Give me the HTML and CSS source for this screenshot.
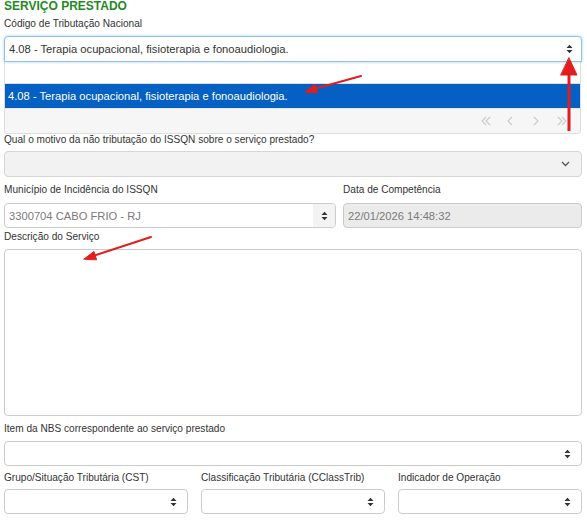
FILE: index.html
```html
<!DOCTYPE html>
<html lang="pt-BR">
<head>
<meta charset="utf-8">
<title>Serviço Prestado</title>
<link rel="stylesheet" href="styles.css">
</head>
<body>
<div class="page">
  <h2 class="title">SERVIÇO PRESTADO</h2>

  <div class="field f-codigo">
    <label class="lbl">Código de Tributação Nacional</label>
    <div class="ctl select focus">
      <span class="val">4.08 - Terapia ocupacional, fisioterapia e fonoaudiologia.</span>
      <svg class="sort" width="7" height="10" viewBox="0 0 7 10"><path d="M0.5 4 L3.5 0.8 L6.5 4 Z M0.5 6 L3.5 9.2 L6.5 6 Z" fill="#333"/></svg>
    </div>
    <div class="dropdown">
      <div class="dd-search"></div>
      <div class="dd-opt">4.08 - Terapia ocupacional, fisioterapia e fonoaudiologia.</div>
      <div class="dd-pager">
        <svg width="90" height="12" viewBox="0 0 90 12" class="pager-icons">
          <g fill="none" stroke="#c9c9c9" stroke-width="1.1">
            <polyline points="5,2 1,6 5,10"/><polyline points="9,2 5,6 9,10"/>
            <polyline points="31,2 27,6 31,10"/>
            <polyline points="53,2 57,6 53,10"/>
            <polyline points="77,2 81,6 77,10"/><polyline points="81,2 85,6 81,10"/>
          </g>
        </svg>
      </div>
    </div>
  </div>

  <div class="field f-motivo">
    <label class="lbl">Qual o motivo da não tributação do ISSQN sobre o serviço prestado?</label>
    <div class="ctl select disabled">
      <span class="val"></span>
      <svg class="chev" width="9" height="6" viewBox="0 0 9 6"><polyline points="1,1 4.5,4.5 8,1" fill="none" stroke="#555" stroke-width="1.3"/></svg>
    </div>
  </div>

  <div class="row2">
    <div class="field f-mun">
      <label class="lbl">Município de Incidência do ISSQN</label>
      <div class="ctl select addon-sel">
        <span class="val muted">3300704 CABO FRIO - RJ</span>
        <span class="addon"><svg class="sort" width="7" height="10" viewBox="0 0 7 10"><path d="M0.5 4 L3.5 0.8 L6.5 4 Z M0.5 6 L3.5 9.2 L6.5 6 Z" fill="#333"/></svg></span>
      </div>
    </div>
    <div class="field f-data">
      <label class="lbl">Data de Competência</label>
      <div class="ctl input readonly"><span class="val muted">22/01/2026 14:48:32</span></div>
    </div>
  </div>

  <div class="field f-desc">
    <label class="lbl">Descrição do Serviço</label>
    <div class="ctl textarea"></div>
  </div>

  <div class="field f-nbs">
    <label class="lbl">Item da NBS correspondente ao serviço prestado</label>
    <div class="ctl select">
      <span class="val"></span>
      <svg class="sort" width="7" height="10" viewBox="0 0 7 10"><path d="M0.5 4 L3.5 0.8 L6.5 4 Z M0.5 6 L3.5 9.2 L6.5 6 Z" fill="#333"/></svg>
    </div>
  </div>

  <div class="row3">
    <div class="field">
      <label class="lbl">Grupo/Situação Tributária (CST)</label>
      <div class="ctl select"><span class="val"></span><svg class="sort" width="7" height="10" viewBox="0 0 7 10"><path d="M0.5 4 L3.5 0.8 L6.5 4 Z M0.5 6 L3.5 9.2 L6.5 6 Z" fill="#333"/></svg></div>
    </div>
    <div class="field">
      <label class="lbl">Classificação Tributária (CClassTrib)</label>
      <div class="ctl select"><span class="val"></span><svg class="sort" width="7" height="10" viewBox="0 0 7 10"><path d="M0.5 4 L3.5 0.8 L6.5 4 Z M0.5 6 L3.5 9.2 L6.5 6 Z" fill="#333"/></svg></div>
    </div>
    <div class="field">
      <label class="lbl">Indicador de Operação</label>
      <div class="ctl select"><span class="val"></span><svg class="sort" width="7" height="10" viewBox="0 0 7 10"><path d="M0.5 4 L3.5 0.8 L6.5 4 Z M0.5 6 L3.5 9.2 L6.5 6 Z" fill="#333"/></svg></div>
    </div>
  </div>

  <svg class="arrows" width="587" height="531" viewBox="0 0 587 531">
    <g stroke="#e21d1d" stroke-width="2" fill="#e21d1d" stroke-linecap="round">
      <line x1="361" y1="76" x2="314" y2="89"/>
      <path d="M305 92 L315 84.5 L317 92.5 Z" stroke-width="1"/>
      <line x1="151" y1="237" x2="93" y2="256"/>
      <path d="M84 259 L94 251.5 L96.5 259.5 Z" stroke-width="1"/>
      <line x1="569" y1="131" x2="569" y2="72" stroke-width="3" stroke-linecap="butt"/>
      <path d="M569 58 L577 75 L561 75 Z" stroke-width="1"/>
    </g>
  </svg>
</div>
</body>
</html>
```

FILE: styles.css
```css
* { box-sizing: border-box; }
html, body { margin: 0; padding: 0; background: #fff; }
body { font-family: "Liberation Sans", Arial, sans-serif; color: #333; }

.page {
  position: relative;
  width: 587px;
  height: 531px;
  padding: 0 5px 0 4px;
  overflow: hidden;
}

.title {
  margin: 0;
  font-size: 12px;
  line-height: 13px;
  font-weight: bold;
  color: #1f8a24;
}

.lbl {
  display: block;
  font-size: 10.1px;
  line-height: 12px;
  height: 12px;
  color: #333;
  white-space: nowrap;
}

.field { display: flex; flex-direction: column; }

.ctl {
  position: relative;
  display: flex;
  align-items: center;
  height: 26px;
  border: 1px solid #ccc;
  border-radius: 4px;
  background: #fff;
  padding: 0 10px 0 4px;
}

.val {
  flex: 1;
  font-size: 11.2px;
  color: #333;
  white-space: nowrap;
  overflow: hidden;
}
.val.muted { color: #7a7a7a; }

.sort { flex: none; display: block; }
.chev { flex: none; display: block; margin-right: 1px; }

.f-codigo { margin-top: 5px; }
.f-codigo .lbl { margin-bottom: 6px; }
.select.focus {
  border-color: #8fc2ee;
  box-shadow: 0 0 3px rgba(102, 175, 233, 0.6);
  border-radius: 4px 4px 0 0;
  padding-right: 8px;
}

.dropdown {
  width: 577px;
  height: 72px;
  border: 1px solid #ddd;
  border-top: none;
  border-radius: 0 0 4px 4px;
  display: flex;
  flex-direction: column;
  background: #fff;
}
.dd-search { height: 22px; border-bottom: 1px solid #ddd; }
.dd-opt {
  height: 24px;
  background: #0460c2;
  color: #fff;
  font-size: 11.2px;
  line-height: 24px;
  padding-left: 3px;
}
.dd-pager {
  flex: 1;
  background: #f6f6f6;
  border-top: 1px solid #e6e6e6;
  border-radius: 0 0 4px 4px;
  display: flex;
  justify-content: flex-end;
  align-items: center;
  padding-right: 9px;
}
.pager-icons { display: block; }

.f-motivo { margin-top: 0; }
.f-motivo .lbl { margin-bottom: 5px; }
.select.disabled { background: #f2f2f2; border-color: #d6d6d6; padding-right: 10px; }

.row2 {
  display: flex;
  gap: 7px;
  margin-top: 7px;
}
.row2 .lbl { margin-bottom: 7px; }
.f-mun { width: 332px; }
.f-data { flex: 1; }
.row2 .ctl { height: 25px; }
.addon-sel { padding-right: 0; }
.addon {
  flex: none;
  width: 22px;
  height: 100%;
  background: #f3f3f3;
  border-radius: 0 3px 3px 0;
  display: flex;
  align-items: center;
  justify-content: center;
}
.input.readonly { background: #ebebeb; }

.f-desc { margin-top: 3px; }
.f-desc .lbl { margin-bottom: 6px; }
.textarea { height: 167px; }

.f-nbs { margin-top: 7px; }
.f-nbs .lbl { margin-bottom: 6px; }
.f-nbs .ctl { height: 25px; }

.row3 {
  display: flex;
  justify-content: space-between;
  margin-top: 6px;
}
.row3 .field { width: 184px; }
.row3 .lbl { margin-bottom: 5px; }
.row3 .ctl { height: 25px; }

.arrows {
  position: absolute;
  left: 0;
  top: 0;
  pointer-events: none;
}
```
